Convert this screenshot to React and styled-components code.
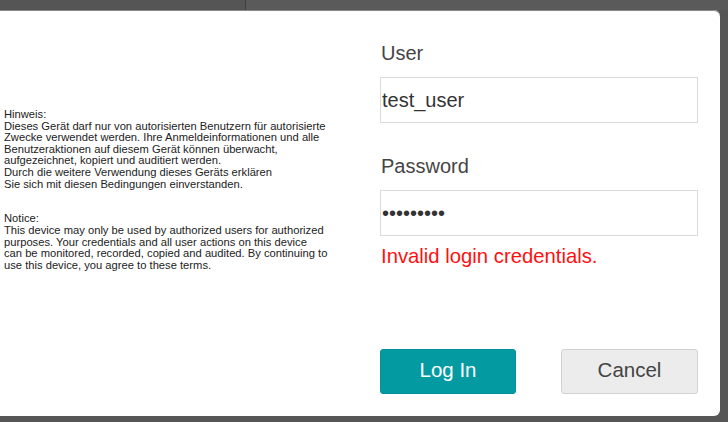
import styled, { createGlobalStyle } from "styled-components";

const GlobalStyle = createGlobalStyle`
  html, body {
    margin: 0;
    padding: 0;
    background: #565656;
  }
  body {
    font-family: "Liberation Sans", Arial, sans-serif;
  }
`;

const Backdrop = styled.div`
  width: 728px;
  height: 422px;
  background: #565656;
  display: flex;
  flex-direction: column;
  overflow: hidden;
`;

const AppStrip = styled.div`
  height: 10px;
  display: flex;
  flex-shrink: 0;
`;

const StripPane = styled.div`
  width: ${(p) => p.width || "auto"};
  flex: ${(p) => (p.width ? "none" : "1")};
  background: ${(p) => p.bg};
  border-right: ${(p) => (p.divider ? "1px solid #3e3e3e" : "none")};
`;

const Dialog = styled.div`
  width: 720px;
  height: 406px;
  background: #ffffff;
  border-radius: 0 6px 6px 0;
  display: flex;
  box-shadow: 0 1px 0 #8a8a8a inset;
`;

const NoticeColumn = styled.div`
  width: 380px;
  flex-shrink: 0;
  padding: 99px 0 0 4px;
  box-sizing: border-box;
  font-size: 11.2px;
  line-height: 11.6px;
  color: #222;
`;

const NoticePara = styled.p`
  margin: 0 0 23.2px;
`;

const FormColumn = styled.div`
  width: 318px;
  display: flex;
  flex-direction: column;
  padding-top: 32px;
`;

const Label = styled.label`
  font-size: 20px;
  line-height: 23px;
  color: #454545;
  margin-top: ${(p) => p.gap || 0}px;
  margin-left: 1px;
`;

const Field = styled.input`
  width: 318px;
  height: 46px;
  box-sizing: border-box;
  margin-top: 12px;
  border: 1px solid #d9dcdc;
  padding: 0 0 0 1px;
  font-family: "Liberation Sans", Arial, sans-serif;
  font-size: 20px;
  color: #333;
  background: #fff;
  outline: none;
`;

const ErrorText = styled.div`
  margin-top: 9px;
  margin-left: 1px;
  font-size: 20.3px;
  line-height: 22px;
  color: #ff1010;
`;

const ButtonRow = styled.div`
  display: flex;
  justify-content: space-between;
  margin-top: 82px;
`;

const Button = styled.button`
  width: ${(p) => (p.primary ? 136 : 137)}px;
  height: 45px;
  border-radius: 3px;
  box-sizing: border-box;
  font-family: "Liberation Sans", Arial, sans-serif;
  font-size: 20.5px;
  cursor: pointer;
  background: ${(p) => (p.primary ? "#049aa2" : "#ececec")};
  color: ${(p) => (p.primary ? "#ffffff" : "#444444")};
  border: 1px solid ${(p) => (p.primary ? "#03929a" : "#cfd2d2")};
  padding: 0 0 4px;
`;

export default function App() {
  return (
    <>
      <GlobalStyle />
      <Backdrop>
        <AppStrip>
          <StripPane width="245px" bg="#555555" divider />
          <StripPane bg="#5a5a5a" />
        </AppStrip>
        <Dialog>
          <NoticeColumn>
            <NoticePara>
              Hinweis:
              <br />
              Dieses Gerät darf nur von autorisierten Benutzern für autorisierte
              <br />
              Zwecke verwendet werden. Ihre Anmeldeinformationen und alle
              <br />
              Benutzeraktionen auf diesem Gerät können überwacht,
              <br />
              aufgezeichnet, kopiert und auditiert werden.
              <br />
              Durch die weitere Verwendung dieses Geräts erklären
              <br />
              Sie sich mit diesen Bedingungen einverstanden.
            </NoticePara>
            <NoticePara>
              Notice:
              <br />
              This device may only be used by authorized users for authorized
              <br />
              purposes. Your credentials and all user actions on this device
              <br />
              can be monitored, recorded, copied and audited. By continuing to
              <br />
              use this device, you agree to these terms.
            </NoticePara>
          </NoticeColumn>
          <FormColumn>
            <Label htmlFor="user">User</Label>
            <Field id="user" type="text" value="test_user" readOnly />
            <Label htmlFor="pass" gap={32}>
              Password
            </Label>
            <Field id="pass" type="password" value="123456789" readOnly />
            <ErrorText>Invalid login credentials.</ErrorText>
            <ButtonRow>
              <Button primary>Log In</Button>
              <Button>Cancel</Button>
            </ButtonRow>
          </FormColumn>
        </Dialog>
      </Backdrop>
    </>
  );
}
